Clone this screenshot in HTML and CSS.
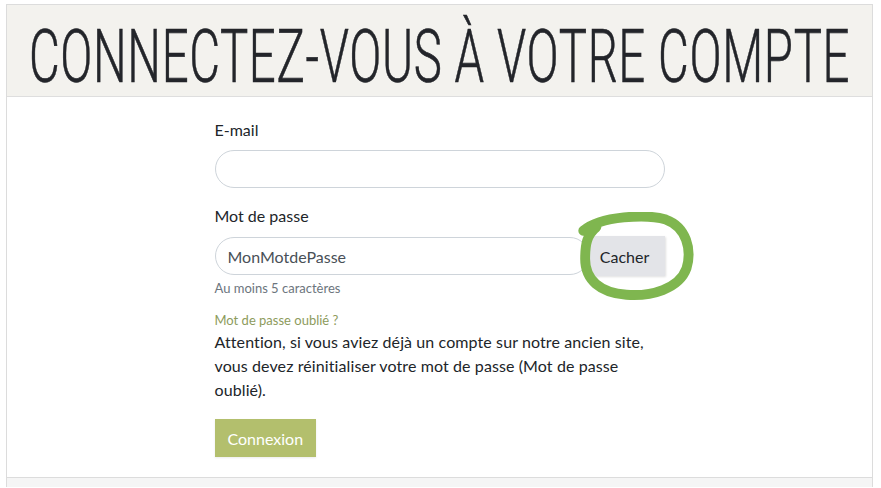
FILE: index.html
```html
<!DOCTYPE html>
<html lang="fr">
<head>
<meta charset="utf-8">
<title>Connexion</title>
<link rel="stylesheet" href="styles.css">
</head>
<body>
<div class="card">
  <div class="card-header">
    <h1 class="title"><span class="title-text">CONNECTEZ-VOUS À VOTRE COMPTE</span></h1>
  </div>
  <div class="card-body">
    <form class="login-form">
      <div class="field">
        <label class="label">E-mail</label>
        <input class="input" type="text">
      </div>
      <div class="field">
        <label class="label">Mot de passe</label>
        <div class="input-group">
          <input class="input input-pw" type="text" value="MonMotdePasse">
          <button type="button" class="btn-toggle">Cacher</button>
          <svg class="scribble" width="122" height="94" viewBox="0 0 130 100" preserveAspectRatio="none">
            <path d="M12 20 C 30 4, 80 2, 100 8 C 122 16, 128 40, 122 60 C 114 82, 84 90, 58 88 C 30 86, 14 72, 14 50 C 14 34, 16 24, 26 16" fill="none" stroke="#7fb64f" stroke-width="10.5" stroke-linecap="round"/>
          </svg>
        </div>
        <div class="hint">Au moins 5 caractères</div>
      </div>
      <a class="forgot" href="#">Mot de passe oublié ?</a>
      <p class="notice">Attention, si vous aviez déjà un compte sur notre ancien site, vous devez réinitialiser votre mot de passe (Mot de passe oublié).</p>
      <button type="button" class="btn-submit">Connexion</button>
    </form>
  </div>
</div>
<div class="footer-card"></div>
</body>
</html>
```

FILE: styles.css
```css
html, body {
  margin: 0;
  padding: 0;
  background: #ffffff;
}
body {
  padding: 4px 8px 0 6px;
  font-family: Lato, "Open Sans", sans-serif;
  color: #212529;
  overflow: hidden;
}
.card {
  border: 1px solid #dcdcdc;
  background: #fff;
}
.card-header {
  background: #f3f2ee;
  border-bottom: 1px solid #dedede;
  height: 92px;
  box-sizing: border-box;
  padding-top: 13px;
  display: flex;
  align-items: center;
  justify-content: center;
}
.title {
  margin: 0;
  font-family: Roboto, sans-serif;
  font-weight: 300;
  font-size: 74px;
  line-height: 1;
  color: #23252a;
  white-space: nowrap;
  display: flex;
  justify-content: center;
  width: 820px;
}
.title-text {
  display: inline-block;
  flex-shrink: 0;
  margin: 0 -232px;
  transform: scaleX(0.64);
  letter-spacing: 1px;
  -webkit-text-stroke: 0.6px #23252a;
}
.card-body {
  padding: 21px 0 20px;
  display: flex;
  justify-content: center;
}
.login-form {
  width: 450px;
  display: flex;
  flex-direction: column;
  align-items: flex-start;
}
.field {
  width: 100%;
  margin-bottom: 16px;
}
.label {
  display: block;
  font-size: 16px;
  line-height: 24px;
  margin-bottom: 8px;
}
.input {
  box-sizing: border-box;
  width: 100%;
  height: 38px;
  border: 1px solid #ced4da;
  border-radius: 19px;
  padding: 0 12px;
  font-family: Lato, sans-serif;
  font-size: 16px;
  color: #495057;
  background: #fff;
  outline: none;
}
.input-group {
  position: relative;
  display: flex;
  align-items: center;
}
.input-pw {
  flex: 1;
}
.btn-toggle {
  margin-left: -4px;
  height: 40px;
  width: 80px;
  border: none;
  background: #e3e4e8;
  box-shadow: 1px 1px 2px rgba(0,0,0,0.12);
  font-family: Lato, sans-serif;
  font-size: 16px;
  color: #212529;
  padding: 0;
}
.scribble {
  position: absolute;
  left: 357px;
  top: -24px;
  pointer-events: none;
}
.hint {
  margin-top: 2px;
  font-size: 13px;
  line-height: 20px;
  color: #6c757d;
}
.forgot {
  font-size: 13px;
  line-height: 20px;
  color: #8d9b5c;
  text-decoration: none;
  margin-top: -4px;
}
.notice {
  margin: 0;
  font-size: 16px;
  line-height: 24px;
  letter-spacing: 0.1px;
  color: #212529;
}
.btn-submit {
  margin-top: 17px;
  height: 38px;
  padding: 0 13px;
  border: none;
  background: #b3bf6d;
  color: #fff;
  font-family: Lato, sans-serif;
  font-size: 16px;
  box-shadow: 0 1px 2px rgba(0,0,0,0.08);
}
.footer-card {
  height: 9px;
  background: #f5f5f5;
  border-left: 1px solid #dcdcdc;
  border-right: 1px solid #dcdcdc;
}
```
